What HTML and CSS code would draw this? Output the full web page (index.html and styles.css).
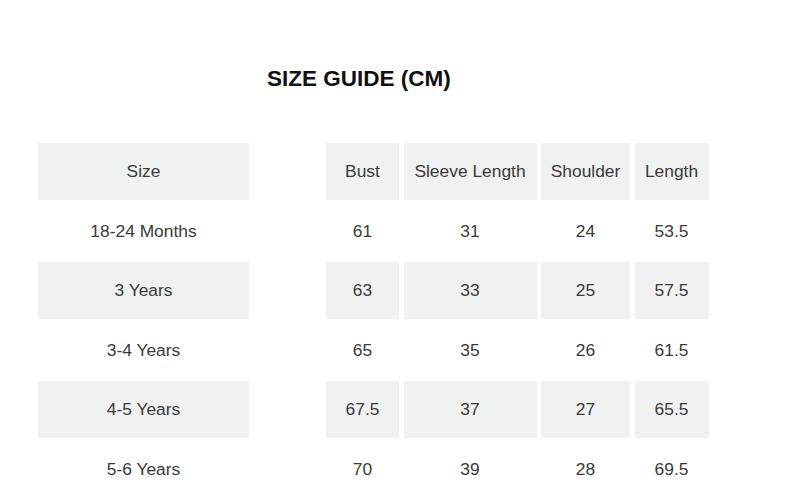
FILE: index.html
```html
<!DOCTYPE html>
<html>
<head>
<meta charset="utf-8">
<link rel="stylesheet" href="styles.css">
</head>
<body>
<h1 class="title">SIZE GUIDE (CM)</h1>
<div class="table">
  <div class="cell shade">Size</div><div class="spacer"></div><div class="cell shade">Bust</div><div class="cell shade">Sleeve Length</div><div class="cell shade">Shoulder</div><div class="cell shade">Length</div>
  <div class="cell">18-24 Months</div><div class="spacer"></div><div class="cell">61</div><div class="cell">31</div><div class="cell">24</div><div class="cell">53.5</div>
  <div class="cell shade">3 Years</div><div class="spacer"></div><div class="cell shade">63</div><div class="cell shade">33</div><div class="cell shade">25</div><div class="cell shade">57.5</div>
  <div class="cell">3-4 Years</div><div class="spacer"></div><div class="cell">65</div><div class="cell">35</div><div class="cell">26</div><div class="cell">61.5</div>
  <div class="cell shade">4-5 Years</div><div class="spacer"></div><div class="cell shade">67.5</div><div class="cell shade">37</div><div class="cell shade">27</div><div class="cell shade">65.5</div>
  <div class="cell">5-6 Years</div><div class="spacer"></div><div class="cell">70</div><div class="cell">39</div><div class="cell">28</div><div class="cell">69.5</div>
</div>
</body>
</html>
```
FILE: styles.css
```css
html, body {
  margin: 0;
  padding: 0;
  background: #ffffff;
  font-family: "Liberation Sans", Arial, sans-serif;
  overflow: hidden;
}
.title {
  margin: 0;
  padding: 66px 0 0 267px;
  font-size: 22.5px;
  line-height: 26px;
  font-weight: bold;
  color: #111111;
}
.table {
  margin: 51px 0 0 38px;
  display: grid;
  grid-template-columns: 211px 68px 73px 133px 89px 74px;
  grid-auto-rows: 57px;
  column-gap: 4.5px;
  row-gap: 2.5px;
}
.cell {
  display: flex;
  align-items: center;
  justify-content: center;
  font-size: 17.4px;
  color: #3a3a3a;
  white-space: nowrap;
}
.shade {
  background: #f0f1f1;
}
```
